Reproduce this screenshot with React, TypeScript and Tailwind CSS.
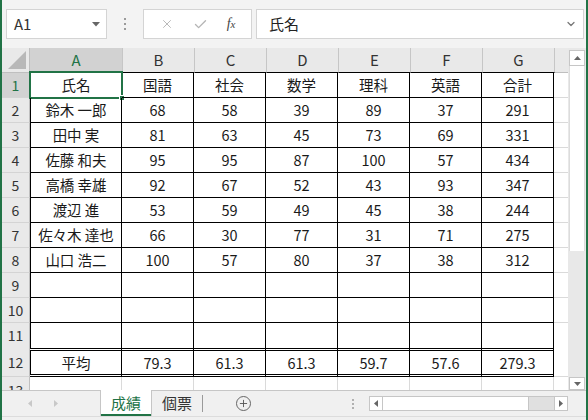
import { ChevronDown, X, Check, Plus } from 'lucide-react';

const cols = ['A', 'B', 'C', 'D', 'E', 'F', 'G'];
const widths = [92, 72, 72, 72, 72, 72, 72];

const data: string[][] = [
  ['氏名', '国語', '社会', '数学', '理科', '英語', '合計'],
  ['鈴木 一郎', '68', '58', '39', '89', '37', '291'],
  ['田中 実', '81', '63', '45', '73', '69', '331'],
  ['佐藤 和夫', '95', '95', '87', '100', '57', '434'],
  ['高橋 幸雄', '92', '67', '52', '43', '93', '347'],
  ['渡辺 進', '53', '59', '49', '45', '38', '244'],
  ['佐々木 達也', '66', '30', '77', '31', '71', '275'],
  ['山口 浩二', '100', '57', '80', '37', '38', '312'],
  ['', '', '', '', '', '', ''],
  ['', '', '', '', '', '', ''],
  ['', '', '', '', '', '', ''],
];
const avg = ['平均', '79.3', '61.3', '61.3', '59.7', '57.6', '279.3'];

function Row({ num, cells, last }: { num: number; cells: string[]; last?: boolean }) {
  return (
    <div className="flex h-[25px] shrink-0">
      <div
        className={`w-[28px] shrink-0 flex items-center justify-center text-[14px] border-r border-[#bfbfbf] ${
          num === 1 ? 'bg-[#d2d2d2] text-[#217346]' : 'bg-[#e9e9e9] text-[#333]'
        } ${last ? '' : 'border-b border-b-[#d4d4d4]'}`}
      >
        {num}
      </div>
      {cells.map((c, i) => (
        <div
          key={i}
          style={{ width: widths[i] }}
          className={`shrink-0 relative flex items-center justify-center text-[14.5px] text-[#1a1a1a] border-r border-black ${
            last ? '' : 'border-b border-b-black'
          } ${i === 0 ? 'border-l border-l-black' : ''}`}
        >
          {c}
          {num === 1 && i === 0 && (
            <>
              <div className="absolute -left-[2px] -top-[2px] -right-[2px] -bottom-[2px] border-2 border-[#217346]" />
              <div className="absolute -right-[4px] -bottom-[4px] w-[6px] h-[6px] bg-[#217346] border border-white" />
            </>
          )}
        </div>
      ))}
      <div className={`flex-1 ${last ? '' : 'border-b border-b-[#dadada]'}`} />
    </div>
  );
}

export default function App() {
  return (
    <div className="w-[588px] h-[420px] overflow-hidden flex flex-col bg-[#f3f3f3] border-x-2 border-[#217346] font-['Noto_Sans_CJK_JP','Noto_Sans',sans-serif] select-none">
      {/* formula bar */}
      <div className="h-[48px] shrink-0 flex items-center pl-[4px] pr-[2px] gap-[4px]">
        <div className="w-[101px] h-[30px] bg-white border border-[#d4d4d4] flex items-center justify-between pl-[7px] pr-[6px]">
          <span className="text-[15px] text-[#333]">A1</span>
          <svg width="8" height="5" viewBox="0 0 8 5"><path d="M0 0h8L4 4.5z" fill="#666" /></svg>
        </div>
        <div className="w-[28px] flex flex-col items-center gap-[3px]">
          <span className="w-[2px] h-[2px] bg-[#9a9a9a]" />
          <span className="w-[2px] h-[2px] bg-[#9a9a9a]" />
          <span className="w-[2px] h-[2px] bg-[#9a9a9a]" />
        </div>
        <div className="w-[109px] h-[30px] bg-white border border-[#d4d4d4] flex items-center justify-around px-[6px]">
          <X className="w-[14px] h-[14px] text-[#b5b5b5]" strokeWidth={1.6} />
          <Check className="w-[15px] h-[15px] text-[#b5b5b5]" strokeWidth={2.2} />
          <span className="font-['Liberation_Serif',serif] italic text-[14px] text-[#444] leading-none">
            f<span className="text-[11px]">x</span>
          </span>
        </div>
        <div className="flex-1 h-[30px] bg-white border border-[#d4d4d4] flex items-center justify-between pl-[12px] pr-[6px]">
          <span className="text-[15px] text-[#222]">氏名</span>
          <ChevronDown className="w-[12px] h-[12px] text-[#777]" strokeWidth={2.5} />
        </div>
      </div>

      {/* grid + vertical scrollbar */}
      <div className="h-[342px] shrink-0 flex bg-white">
        <div className="w-[566px] shrink-0 flex flex-col overflow-hidden">
          {/* column header */}
          <div className="flex h-[25px] shrink-0 bg-[#e9e9e9]">
            <div className="w-[28px] shrink-0 border-r border-b border-[#bfbfbf] flex items-end justify-end p-[3px]">
              <svg width="18" height="18" viewBox="0 0 18 18"><path d="M18 0V18H0z" fill="#b8b8b8" /></svg>
            </div>
            {cols.map((c, i) => (
              <div
                key={c}
                style={{ width: i === 0 ? 93 : widths[i] }}
                className={`shrink-0 flex items-center justify-center text-[15px] border-r border-[#c6c6c6] border-b ${
                  i === 0 ? 'bg-[#d2d2d2] text-[#217346] border-b-[#217346]' : 'text-[#333] border-b-black'
                }`}
              >
                {c}
              </div>
            ))}
            <div className="flex-1 border-b border-[#bfbfbf]" />
          </div>

          {data.map((r, i) => (
            <Row key={i} num={i + 1} cells={r} last={i === data.length - 1} />
          ))}

          {/* average row with double borders */}
          <div className="flex h-[29px] shrink-0">
            <div className="w-[28px] shrink-0 flex items-center justify-center text-[14px] bg-[#e9e9e9] text-[#333] border-r border-[#bfbfbf] border-b border-b-[#d4d4d4]">
              12
            </div>
            {avg.map((c, i) => (
              <div
                key={i}
                style={{ width: widths[i] }}
                className={`shrink-0 flex items-center justify-center text-[14.5px] text-[#1a1a1a] border-r border-black border-y-[3px] border-y-black border-double ${
                  i === 0 ? 'border-l border-l-black' : ''
                }`}
              >
                {c}
              </div>
            ))}
            <div className="flex-1 border-b border-[#dadada]" />
          </div>

          <div className="flex h-[25px] shrink-0">
            <div className="w-[28px] shrink-0 flex items-start justify-center text-[14px] bg-[#e9e9e9] text-[#333] border-r border-[#bfbfbf] pt-[3px]">
              13
            </div>
            {widths.map((w, i) => (
              <div key={i} style={{ width: w }} className="shrink-0 border-r border-[#dadada]" />
            ))}
          </div>
        </div>

        {/* vertical scrollbar */}
        <div className="flex-1 flex flex-col bg-[#e8e8e8] pt-[2px] px-[1px]">
          <div className="h-[16px] shrink-0 bg-white border border-[#c6c6c6] flex items-center justify-center">
            <svg width="7" height="4" viewBox="0 0 7 4"><path d="M0 4h7L3.5 0z" fill="#666" /></svg>
          </div>
          <div className="h-[185px] shrink-0 bg-white border-x border-[#dcdcdc]" />
          <div className="flex-1" />
          <div className="h-[13px] shrink-0 bg-white border border-[#c6c6c6] flex items-center justify-center">
            <svg width="7" height="4" viewBox="0 0 7 4"><path d="M0 0h7L3.5 4z" fill="#666" /></svg>
          </div>
        </div>
      </div>

      {/* sheet tabs */}
      <div className="h-[26px] shrink-0 flex items-stretch border-t border-[#c6c6c6] bg-[#f0f0f0]">
        <div className="w-[98px] shrink-0 flex items-center pl-[26px] gap-[22px]">
          <svg width="4" height="7" viewBox="0 0 4 7"><path d="M4 0v7L0 3.5z" fill="#c8c8c8" /></svg>
          <svg width="4" height="7" viewBox="0 0 4 7"><path d="M0 0v7l4-3.5z" fill="#c8c8c8" /></svg>
        </div>
        <div className="w-[52px] shrink-0 bg-white border-x border-[#c6c6c6] -mt-px flex flex-col items-center justify-end">
          <span className="text-[15px] text-[#217346] leading-[22px]">成績</span>
          <div className="w-full h-[2px] bg-[#217346]" />
        </div>
        <div className="w-[50px] shrink-0 flex items-center justify-center">
          <span className="text-[15px] text-[#333]">個票</span>
        </div>
        <div className="w-px my-[4px] bg-[#9a9a9a]" />
        <div className="w-[80px] shrink-0 flex items-center justify-center">
          <div className="w-[15px] h-[15px] rounded-full border border-[#666] flex items-center justify-center">
            <Plus className="w-[11px] h-[11px] text-[#555]" strokeWidth={2} />
          </div>
        </div>
        <div className="w-[76px] shrink-0 flex items-center justify-end pr-[5px]">
          <div className="flex flex-col gap-[2px]">
            <span className="w-[2px] h-[2px] bg-[#b0b0b0]" />
            <span className="w-[2px] h-[2px] bg-[#b0b0b0]" />
            <span className="w-[2px] h-[2px] bg-[#b0b0b0]" />
          </div>
        </div>
        <div className="flex-1 flex items-center pl-[10px] pr-[18px]">
          <div className="flex-1 h-[15px] flex border border-[#c6c6c6] bg-[#e0e0e0]">
            <div className="w-[13px] bg-white border-r border-[#c6c6c6] flex items-center justify-center">
              <svg width="4" height="7" viewBox="0 0 4 7"><path d="M4 0v7L0 3.5z" fill="#666" /></svg>
            </div>
            <div className="w-[146px] bg-white border-r border-[#c6c6c6]" />
            <div className="flex-1" />
            <div className="w-[13px] bg-white border-l border-[#c6c6c6] flex items-center justify-center">
              <svg width="4" height="7" viewBox="0 0 4 7"><path d="M0 0v7l4-3.5z" fill="#666" /></svg>
            </div>
          </div>
        </div>
      </div>
      <div className="flex-1 bg-[#f0f0f0] border-t border-[#dcdcdc]" />
    </div>
  );
}
